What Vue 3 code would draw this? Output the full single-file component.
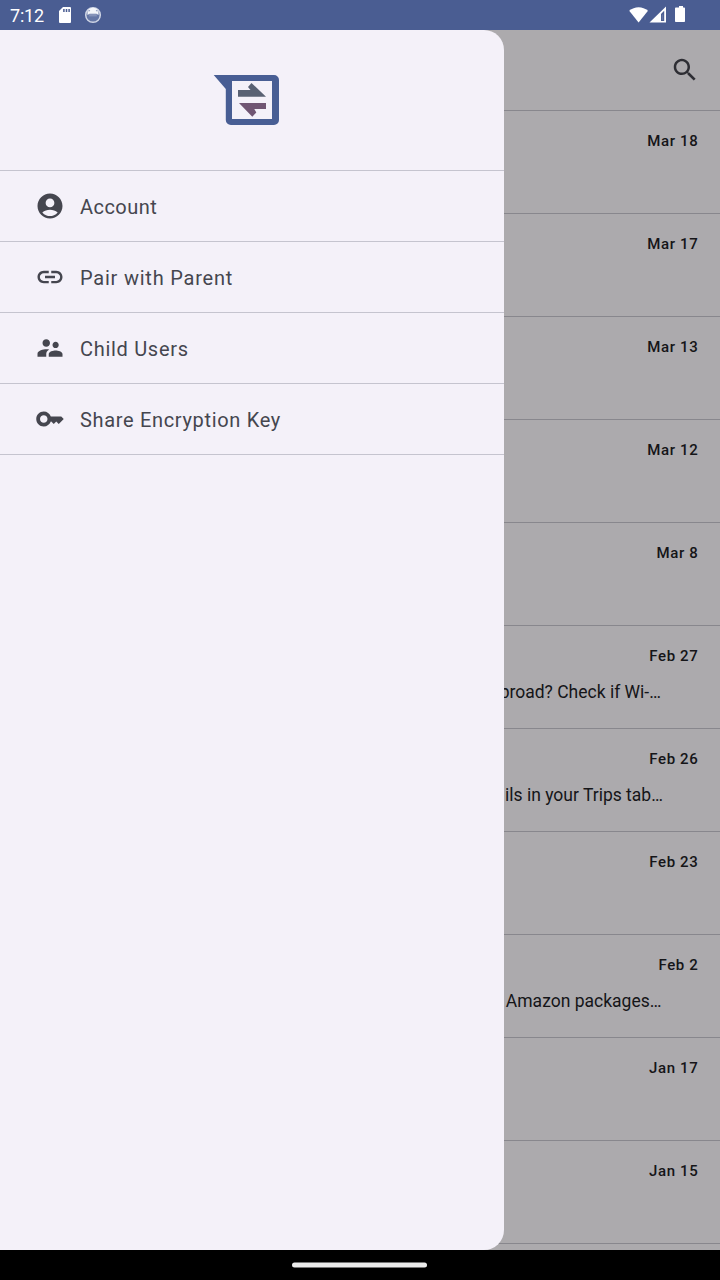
<script setup>
const menu = [
  { label: 'Account', spacing: 0.45, icon: 'M12 2C6.48 2 2 6.48 2 12s4.480 10 10 10 10-4.480 10-10S17.520 2 12 2zm0 4c1.930 0 3.500 1.570 3.500 3.500S13.930 13 12 13s-3.500-1.570-3.500-3.500S10.070 6 12 6zm0 14c-2.030 0-4.430-.82-6.140-2.880C7.550 15.800 9.680 15 12 15s4.450.800 6.140 2.120C16.430 19.180 14.030 20 12 20z' },
  { label: 'Pair with Parent', spacing: 0.78, icon: 'M3.900 12c0-1.710 1.390-3.100 3.100-3.100h4V7H7c-2.760 0-5 2.240-5 5s2.240 5 5 5h4v-1.900H7c-1.710 0-3.100-1.390-3.100-3.100zM8 13h8v-2H8v2zm9-6h-4v1.900h4c1.710 0 3.100 1.390 3.100 3.100s-1.390 3.100-3.100 3.100h-4V17h4c2.760 0 5-2.240 5-5s-2.240-5-5-5z' },
  { label: 'Child Users', spacing: 0.7, icon: 'M16.500 12c1.380 0 2.490-1.120 2.490-2.500S17.880 7 16.500 7 14 8.120 14 9.500s1.120 2.500 2.500 2.500zM9 11c1.660 0 2.990-1.340 2.990-3S10.660 5 9 5 6 6.340 6 8s1.340 3 3 3zm7.500 3c-1.830 0-5.500.92-5.500 2.750V19h11v-2.250c0-1.830-3.670-2.750-5.500-2.750zM9 13c-2.330 0-7 1.170-7 3.500V19h7v-2.250c0-.85.33-2.340 2.370-3.470C10.500 13.100 9.660 13 9 13z' },
  { label: 'Share Encryption Key', spacing: 0.67, icon: 'M21 10h-8.350C11.830 7.670 9.610 6 7 6c-3.310 0-6 2.690-6 6s2.690 6 6 6c2.610 0 4.830-1.670 5.650-4H13l2 2 2-2 2 2 4-4.040L21 10zM7 15c-1.650 0-3-1.350-3-3s1.350-3 3-3 3 1.350 3 3-1.350 3-3 3z' },
]
const messages = [
  { date: 'Mar 18' },
  { date: 'Mar 17' },
  { date: 'Mar 13' },
  { date: 'Mar 12' },
  { date: 'Mar 8' },
  { date: 'Feb 27', text: 'abroad? Check if Wi-…', inset: 37.5 },
  { date: 'Feb 26', text: 'ils in your Trips tab…', inset: 35.5 },
  { date: 'Feb 23' },
  { date: 'Feb 2', text: 'Amazon packages…', inset: 37 },
  { date: 'Jan 17' },
  { date: 'Jan 15' },
]
</script>

<template>
  <div class="screen">
    <header class="status">
      <span class="time">7:12</span>
      <svg class="sd" width="12" height="16" viewBox="0 0 12 16">
        <path fill="#fff" d="M4 0h7a1 1 0 0 1 1 1v14a1 1 0 0 1-1 1H1a1 1 0 0 1-1-1V4z" />
        <path stroke="#4a5d92" stroke-width="1.500" d="M4.900 2v3M7.500 2v3M10.100 2v3" />
      </svg>
      <svg class="face" width="18" height="18" viewBox="0 0 18 18">
        <circle cx="9" cy="9" r="7.300" fill="#6577a6" stroke="#cfd5e5" stroke-width="1.500" />
        <path fill="#f4f6fa" d="M3.500 5.500C4.500 3 6.500 1.800 9 1.800s4.500 1.200 5.500 3.700V9l-2-1.200h-7L3.500 9z" />
        <path fill="#8593b9" d="M5.200 8h7.600v2.400H5.200z" />
        <path fill="#7888b1" d="M4.500 3.900l1.800.6-1.500 1.300zM13.500 3.900l-1.800.6 1.500 1.300z" />
      </svg>
      <svg class="signals" width="60" height="18" viewBox="0 0 60 18">
        <path fill="#fff" d="M.2 4.800C5.500.1 13.700.1 19 4.800L9.600 16.400z" />
        <path fill="#fff" fill-rule="evenodd" d="M37 .500v16H20.500zM32 8v7h3.200V4.800z" />
        <path fill="#fff" d="M32.800 8.500h1.400v5.500h-1.400z" opacity=".15" />
        <path fill="#fff" d="M50 0h4v1.600h1.200c.5 0 .8.300.8.800v12.800c0 .5-.3.800-.8.800h-8.400c-.5 0-.8-.3-.8-.8V2.400c0-.5.300-.8.800-.8H50z" />
      </svg>
    </header>

    <main class="body">
      <section class="inbox">
        <div class="toolbar">
          <svg width="30" height="30" viewBox="0 0 24 24" fill="#2e2e34">
            <path d="M15.500 14h-.79l-.28-.27C15.410 12.590 16 11.110 16 9.500 16 5.910 13.090 3 9.500 3S3 5.910 3 9.500 5.910 16 9.500 16c1.610 0 3.090-.59 4.230-1.570l.27.28v.79l5 4.990L20.490 19l-4.990-5zm-6 0C7.010 14 5 11.990 5 9.500S7.010 5 9.500 5 14 7.010 14 9.500 11.990 14 9.500 14z" />
          </svg>
        </div>
        <article v-for="m in messages" :key="m.date" class="message">
          <time>{{ m.date }}</time>
          <p v-if="m.text" :style="{ marginRight: m.inset + 'px' }">{{ m.text }}</p>
        </article>
      </section>

      <nav class="drawer">
        <div class="brand">
          <svg width="68" height="54" viewBox="0 0 68 54">
            <path fill="#485e94" fill-rule="evenodd" d="M.7 2H61a5 5 0 0 1 5 5v40a5 5 0 0 1-5 5H17.800a5 5 0 0 1-5-5V16zM19 8v38h40V8z" />
            <path fill="#596173" d="M25 17h12.500l-2.500-3 3.500-4L53 23.700H25z" />
            <path fill="#705573" d="M53 30v6H41.300l2 3.500-4 4.300L26 30z" />
          </svg>
        </div>
        <a v-for="item in menu" :key="item.label" class="item">
          <svg width="30" height="30" viewBox="0 0 24 24" fill="#45464f"><path :d="item.icon" /></svg>
          <span :style="{ letterSpacing: item.spacing + 'px' }">{{ item.label }}</span>
        </a>
      </nav>
    </main>

    <footer class="navbar">
      <svg width="136" height="6" viewBox="0 0 136 6"><rect x="0" y=".5" width="135" height="5" rx="2.500" fill="#ebebeb" /></svg>
    </footer>
  </div>
</template>

<style>
body { margin: 0; }
</style>

<style scoped>
.screen { width: 720px; height: 1280px; display: flex; flex-direction: column; overflow: hidden; font-family: Roboto, "Liberation Sans", sans-serif; background: #000; }
.status { height: 30px; flex: none; background: #4a5d92; display: flex; align-items: flex-start; box-sizing: border-box; padding: 6px 31px 0 10px; color: #fff; }
.time { width: 49px; font-size: 18px; line-height: 20px; letter-spacing: -.2px; }
.sd { margin-top: 1px; }
.face { margin-left: 13px; }
.signals { margin-left: auto; }
.body { position: relative; height: 1220px; flex: none; overflow: hidden; background: #acaaad; }
.toolbar { height: 81px; box-sizing: border-box; border-bottom: 1px solid #88878d; display: flex; justify-content: flex-end; padding: 25px 20px 0 0; }
.message { height: 103px; box-sizing: border-box; border-bottom: 1px solid #88878d; padding: 20px 21.600px 0 0; display: flex; flex-direction: column; align-items: flex-end; color: #151518; }
time { font-size: 15px; line-height: 20px; font-weight: 500; letter-spacing: .625px; }
p { margin: 14px 0 0; font-size: 17.500px; line-height: 25px; white-space: nowrap; }
.drawer { position: absolute; top: 0; left: 0; width: 504px; height: 1220px; background: #f4f1f9; border-radius: 0 20px 20px 0; }
.brand { height: 141px; box-sizing: border-box; border-bottom: 1px solid #c5c4cf; display: flex; justify-content: center; padding: 43px 10px 0 0; }
.item { height: 71px; box-sizing: border-box; border-bottom: 1px solid #c5c4cf; display: flex; align-items: center; gap: 15px; padding-left: 35px; color: #45464f; font-size: 20px; line-height: 30px; }
.item span { position: relative; top: 1px; }
.navbar { height: 30px; display: flex; justify-content: center; align-items: center; background: #000; }
</style>
